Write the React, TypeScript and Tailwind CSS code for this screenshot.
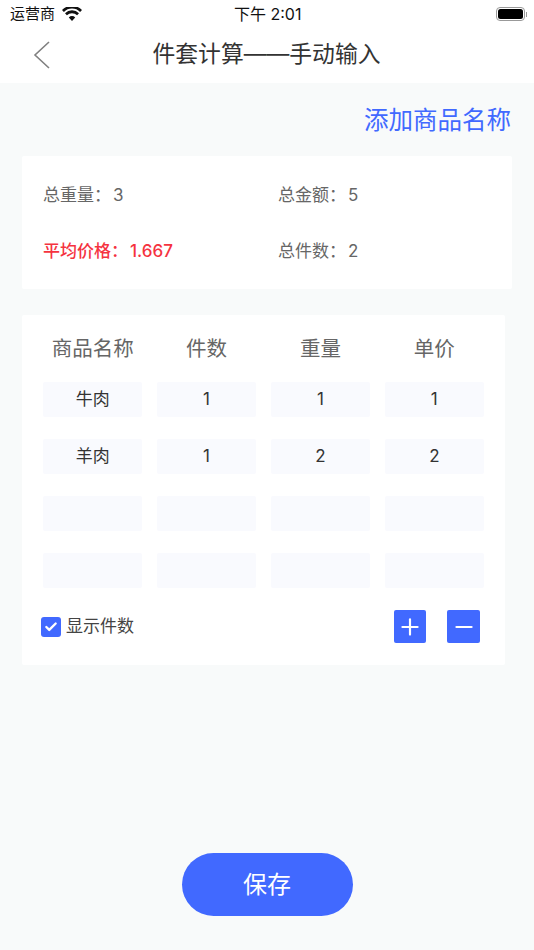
import React from 'react';
import { Plus, Minus, Check } from 'lucide-react';

const font = "font-['Inter','Noto_Sans_CJK_SC',sans-serif]";

const rows = [
  ['牛肉', '1', '1', '1'],
  ['羊肉', '1', '2', '2'],
  ['', '', '', ''],
  ['', '', '', ''],
];

const headers = ['商品名称', '件数', '重量', '单价'];

const App: React.FC = () => {
  return (
    <div className={`${font} w-[534px] h-[950px] bg-[#f8fafa] flex flex-col overflow-hidden`}>
      {/* 状态栏 */}
      <div className="h-[28px] bg-white flex items-center justify-between pl-[10px] pr-[7px] text-[15px] text-[#111] relative">
        <div className="flex items-center gap-[7px]">
          <span>运营商</span>
          <svg width="20" height="14" viewBox="0 0 20 14" fill="#111">
            <path d="M10 14 L6.8 10.4 A4.6 4.6 0 0 1 13.2 10.4 Z" />
            <path d="M4.9 8.3 L3 6.2 A10 10 0 0 1 17 6.2 L15.1 8.3 A7.4 7.4 0 0 0 4.9 8.3 Z" />
            <path d="M1.9 5 L0 3 A14 14 0 0 1 20 3 L18.1 5 A11.4 11.4 0 0 0 1.9 5 Z" />
          </svg>
        </div>
        <span className="absolute left-[234px] top-[4px] text-[16px] leading-[20px]">下午 2:01</span>
        <div className="flex items-center">
          <div className="w-[29px] h-[14px] rounded-[4px] border border-[#999] p-[1px]">
            <div className="w-full h-full rounded-[2.5px] bg-black" />
          </div>
          <div className="w-[1px] h-[5px] bg-[#999] ml-[1px]" />
        </div>
      </div>

      {/* 导航栏 */}
      <div className="h-[55px] bg-white flex items-center justify-center relative pb-[2px]">
        <svg className="absolute left-[33px] top-[12px]" width="18" height="30" viewBox="0 0 18 30" fill="none" stroke="#808080" strokeWidth="1.6">
          <path d="M16 2 L2 15 L16 28" />
        </svg>
        <span className="text-[22.8px] text-[#333] pr-[1px]">件套计算——手动输入</span>
      </div>

      {/* 添加商品名称 */}
      <div className="h-[73px] flex items-center justify-end pr-[23px] pt-[1px] text-[24.5px] text-[#4169ff]">
        添加商品名称
      </div>

      {/* 汇总 */}
      <div className="ml-[22px] mr-[22px] h-[133px] bg-white rounded-[2px] pl-[21px] grid grid-cols-[235px_1fr] grid-rows-2 pt-[12px] pb-[10px] text-[17px] text-[#666] items-center">
        <span>总重量：<span className="ml-[2px]">3</span></span>
        <span>总金额：<span className="ml-[2px]">5</span></span>
        <span className="text-[#f5333f] font-medium">平均价格：<span className="ml-[2px]">1.667</span></span>
        <span>总件数：<span className="ml-[2px]">2</span></span>
      </div>

      {/* 商品表格 */}
      <div className="mt-[26px] ml-[22px] mr-[29px] h-[350px] bg-white rounded-[2px] px-[21px]">
        <div className="grid grid-cols-4 gap-x-[14.5px] w-[441px] h-[67px] items-center pt-[1px]">
          {headers.map((h) => (
            <span key={h} className="text-[20.5px] text-[#666] text-center">{h}</span>
          ))}
        </div>
        <div className="grid grid-cols-4 gap-x-[14.5px] gap-y-[22px] w-[441px]">
          {rows.map((row, i) =>
            row.map((cell, j) => (
              <div
                key={`${i}-${j}`}
                className="h-[35px] bg-[#f9fafe] rounded-[2px] flex items-center justify-center text-[17px] text-[#333]"
              >
                {cell}
              </div>
            ))
          )}
        </div>
        <div className="flex items-center justify-between mt-[22px] -ml-[2px] pr-[4px]">
          <div className="flex items-center gap-[5px]">
            <div className="w-[20px] h-[20px] rounded-[3px] bg-[#4169ff] flex items-center justify-center">
              <Check className="text-white" size={14} strokeWidth={4} />
            </div>
            <span className="text-[17px] text-[#444]">显示件数</span>
          </div>
          <div className="flex items-center gap-[21px]">
            <button className="w-[32px] h-[33px] rounded-[2px] bg-[#4169ff] flex items-center justify-center">
              <Plus className="text-white" size={26} strokeWidth={2} />
            </button>
            <button className="w-[33px] h-[33px] rounded-[2px] bg-[#4169ff] flex items-center justify-center">
              <Minus className="text-white" size={26} strokeWidth={2} />
            </button>
          </div>
        </div>
      </div>

      {/* 保存 */}
      <div className="flex justify-center mt-[188px]">
        <button className="w-[171px] h-[63px] rounded-full bg-[#4169ff] text-white text-[24px]">保存</button>
      </div>
    </div>
  );
};

export default App;
